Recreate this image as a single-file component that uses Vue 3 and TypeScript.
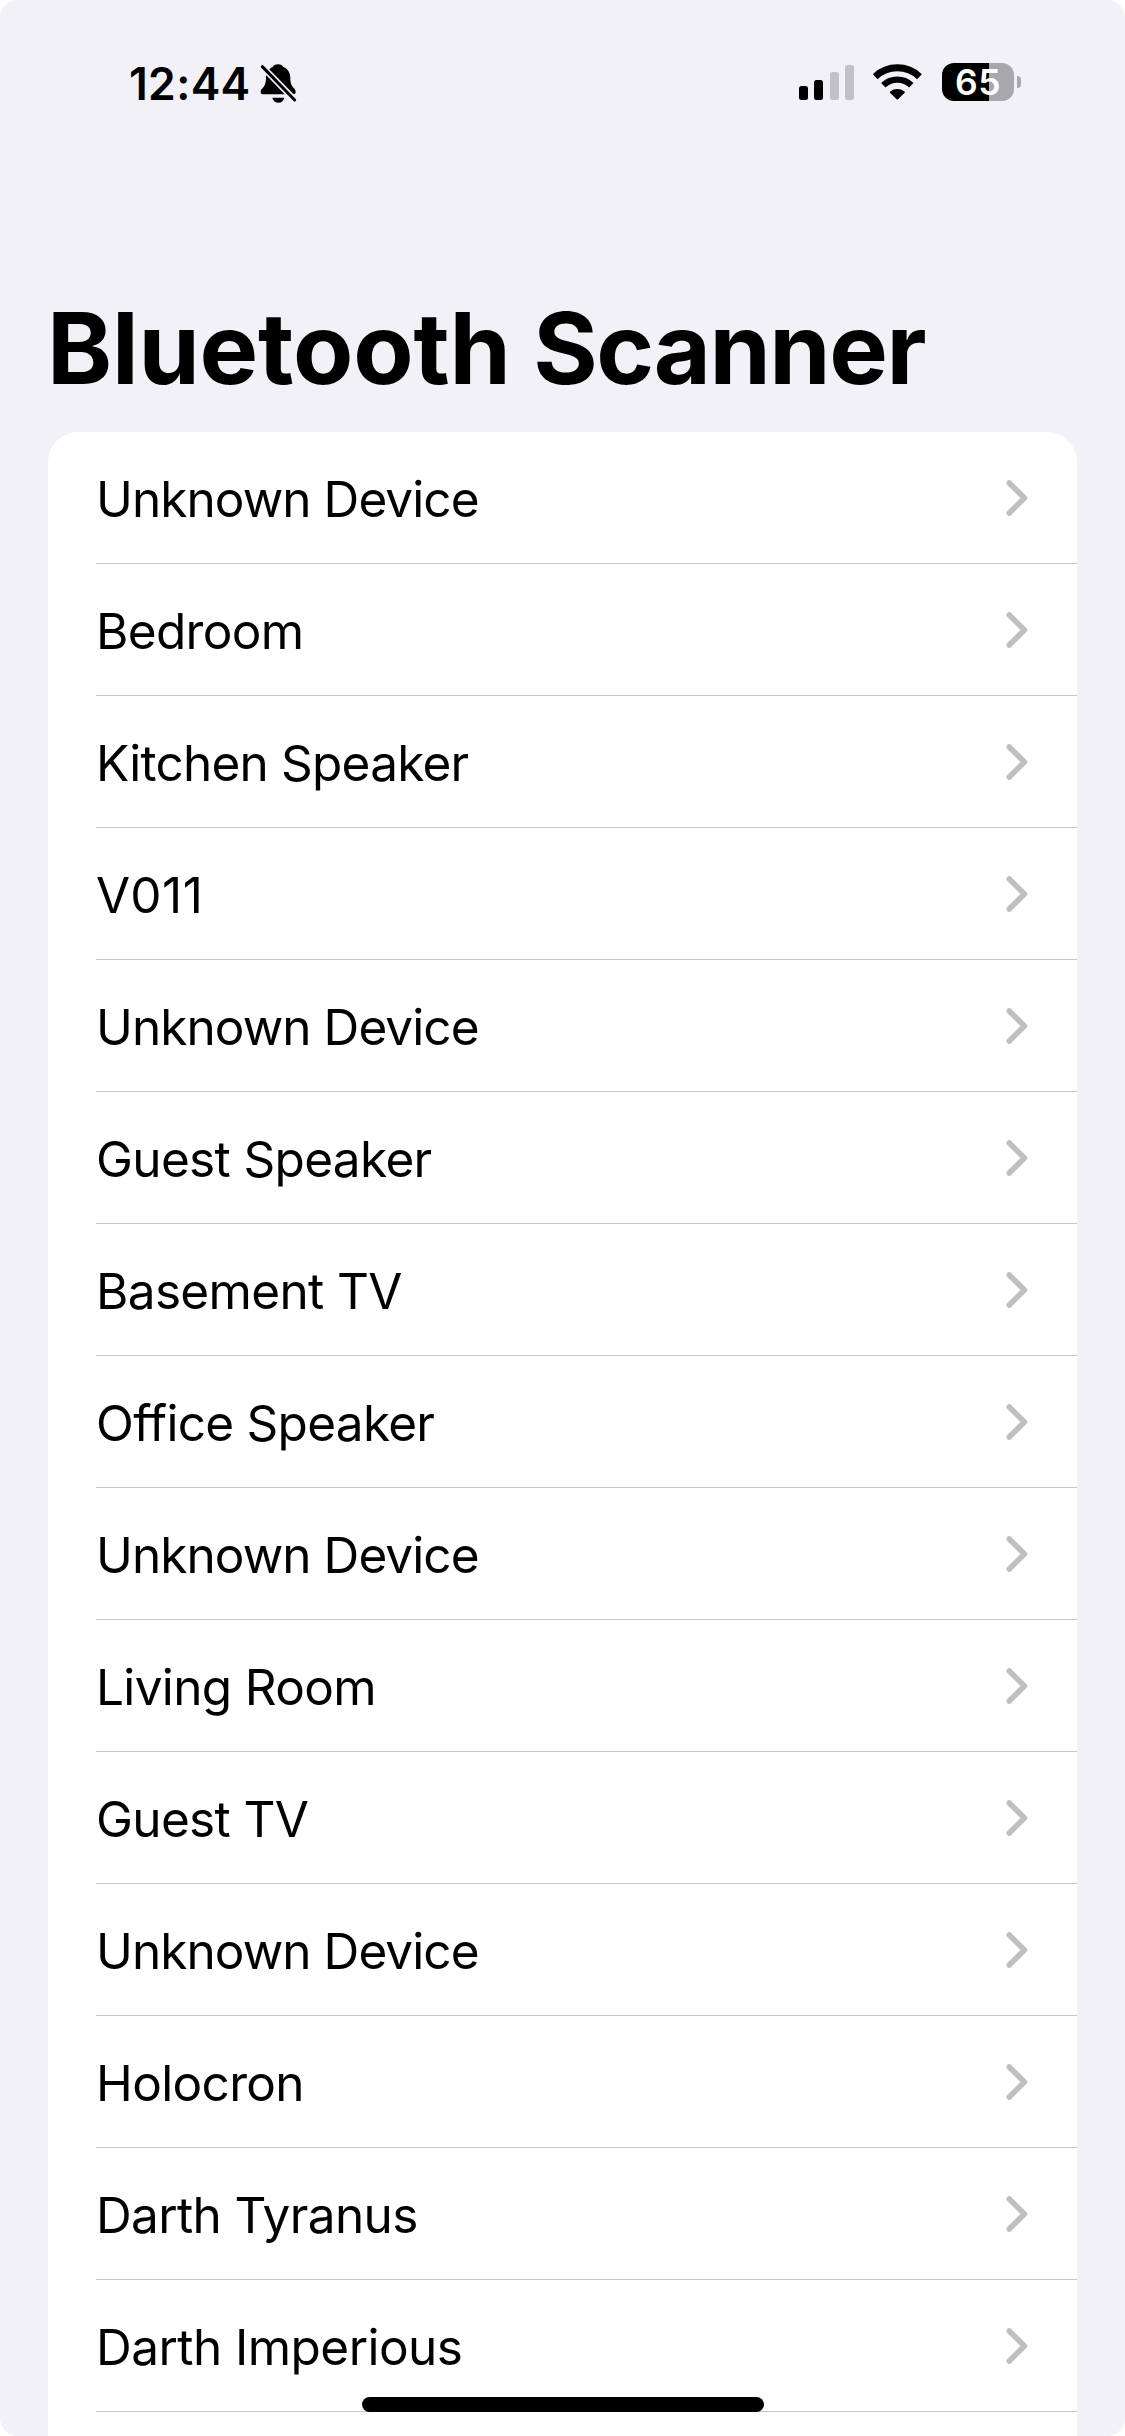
<script setup lang="ts">
interface Device {
  id: number
  name: string
  tracking: number
}

const DEFAULT_TRACKING = -0.65

const trackingFor: Record<string, number> = {
  'Unknown Device': -0.92,
  'Kitchen Speaker': -0.78,
  'Office Speaker': -0.72,
  'Darth Imperious': -0.55,
  'V011': 0.6,
}

const names: string[] = [
  'Unknown Device',
  'Bedroom',
  'Kitchen Speaker',
  'V011',
  'Unknown Device',
  'Guest Speaker',
  'Basement TV',
  'Office Speaker',
  'Unknown Device',
  'Living Room',
  'Guest TV',
  'Unknown Device',
  'Holocron',
  'Darth Tyranus',
  'Darth Imperious',
]

const devices: Device[] = names.map((name, id) => ({
  id,
  name,
  tracking: trackingFor[name] ?? DEFAULT_TRACKING,
}))
</script>

<template>
  <div class="backdrop">
    <main class="screen">
      <header class="status">
        <div class="clock">
          <span class="time">12:44</span>
          <svg class="bell" viewBox="0 0 114 126" aria-hidden="true">
            <path d="M38 12C41 7 46 4 54 4s14 3 16 8C86 18 91 32 91 46c0 16 3 22 13 32 2 3 3 6 3 9 0 5-3 7-8 7H10c-5 0-8-3-8-7 0-5 2-8 6-12 6-6 9-13 10-27 0-16 6-30 20-36Z" />
            <path d="M37 104h36c-2 9-9 15-18 15s-16-6-18-15Z" />
            <line class="gap" x1="2" y1="6" x2="112" y2="119" />
            <line class="slash" x1="7" y1="11" x2="104" y2="111" />
          </svg>
        </div>
        <div class="indicators">
          <div class="signal">
            <i class="bar b1"></i>
            <i class="bar b2"></i>
            <i class="bar b3 off"></i>
            <i class="bar b4 off"></i>
          </div>
          <svg class="wifi" viewBox="0 0 147 111" aria-hidden="true">
            <path class="arc" stroke-width="21" d="M6.6 38A96.5 96.5 0 0 1 139.4 38" />
            <path class="arc" stroke-width="19" d="M31 63.8A61 61 0 0 1 115 63.8" />
            <path d="M71 106 51 86Q49.5 84 51.5 82.5A36 36 0 0 1 94.5 82.5Q96.5 84 95 86L75 106Q73 108 71 106Z" />
          </svg>
          <div class="battery">
            <div class="cell"><span class="level">65</span></div>
            <i class="nub"></i>
          </div>
        </div>
      </header>

      <h1 class="title"><span class="first">Bluetooth</span> <span class="second">Scanner</span></h1>

      <ul class="list">
        <li v-for="device in devices" :key="device.id" class="row">
          <span class="name" :style="{ letterSpacing: device.tracking + 'px' }">{{ device.name }}</span>
          <svg class="chevron" viewBox="0 0 22 38" aria-hidden="true">
            <path d="M3.2 4 18.4 19 3.2 34" />
          </svg>
        </li>
      </ul>

      <div class="home"></div>
    </main>
  </div>
</template>

<style>
body {
  margin: 0;
  background: #fff;
}
</style>

<style scoped>
.backdrop {
  width: 1125px;
  height: 2436px;
  background: #fff;
  overflow: hidden;
}
.screen {
  position: relative;
  display: flex;
  flex-direction: column;
  box-sizing: border-box;
  width: 1125px;
  height: 2436px;
  padding: 0 48px;
  background: #f2f1f8;
  border-radius: 18px;
  overflow: hidden;
  color: #000;
  font-family: Inter, "Liberation Sans", sans-serif;
}
.status {
  flex: none;
  display: flex;
  justify-content: space-between;
  height: 40px;
  padding: 63px 56px 0 81px;
}
.clock {
  display: flex;
  align-items: flex-start;
}
.time {
  width: 131px;
  line-height: 42px;
  font-size: 44.5px;
  font-weight: 600;
  letter-spacing: 0.3px;
}
.bell {
  width: 38px;
  height: 42px;
}
.gap {
  stroke: #f2f1f8;
  stroke-width: 19;
}
.slash {
  stroke: #000;
  stroke-width: 9;
  stroke-linecap: round;
}
.indicators {
  display: flex;
  align-items: flex-start;
}
.signal {
  display: flex;
  align-items: flex-end;
  gap: 6.3px;
  height: 37px;
  margin-right: 19px;
}
.bar {
  width: 9px;
  border-radius: 2.5px;
  background: #000;
}
.b1 { height: 14px; }
.b2 { height: 20px; }
.b3 { height: 28px; }
.b4 { height: 35px; }
.off { background: #c1c0c5; }
.wifi {
  width: 49px;
  height: 37px;
  margin: 1px 20px 0 0;
}
.arc {
  fill: none;
  stroke: #000;
}
.battery {
  display: flex;
  align-items: center;
  gap: 3px;
}
.cell {
  display: flex;
  justify-content: center;
  width: 72px;
  height: 38px;
  border-radius: 12px;
  background: linear-gradient(90deg, #000 47px, #a8a7ac 47px);
}
.level {
  color: #fff;
  line-height: 40px;
  font-size: 35.5px;
  font-weight: 600;
  letter-spacing: 0.6px;
}
.nub {
  width: 4px;
  height: 12px;
  border-radius: 0 4px 4px 0;
  background: #a8a7ac;
}
.title {
  flex: none;
  margin: 186px 0 23px -1px;
  height: 120px;
  line-height: 120px;
  font-size: 98.5px;
  font-weight: 700;
  letter-spacing: -0.73px;
  white-space: nowrap;
}
.first {
  letter-spacing: -0.2px;
}
.second {
  letter-spacing: -1.45px;
}
.list {
  flex: none;
  margin: 0;
  padding: 0 0 0 48px;
  height: 2040px;
  list-style: none;
  background: #fff;
  border-radius: 30px 30px 0 0;
}
.row {
  display: flex;
  align-items: center;
  justify-content: space-between;
  box-sizing: border-box;
  height: 132px;
  padding-right: 49px;
  border-bottom: 1px solid #c6c6c8;
}
.name {
  line-height: 60px;
  padding-top: 2px;
  font-size: 49.5px;
  white-space: nowrap;
}
.chevron {
  width: 22px;
  height: 38px;
}
.chevron path {
  fill: none;
  stroke: #bfbfc1;
  stroke-width: 5.6;
  stroke-linecap: round;
  stroke-linejoin: round;
}
.home {
  position: absolute;
  left: 362px;
  bottom: 24px;
  width: 402px;
  height: 15px;
  border-radius: 8px;
  background: #000;
}
</style>
